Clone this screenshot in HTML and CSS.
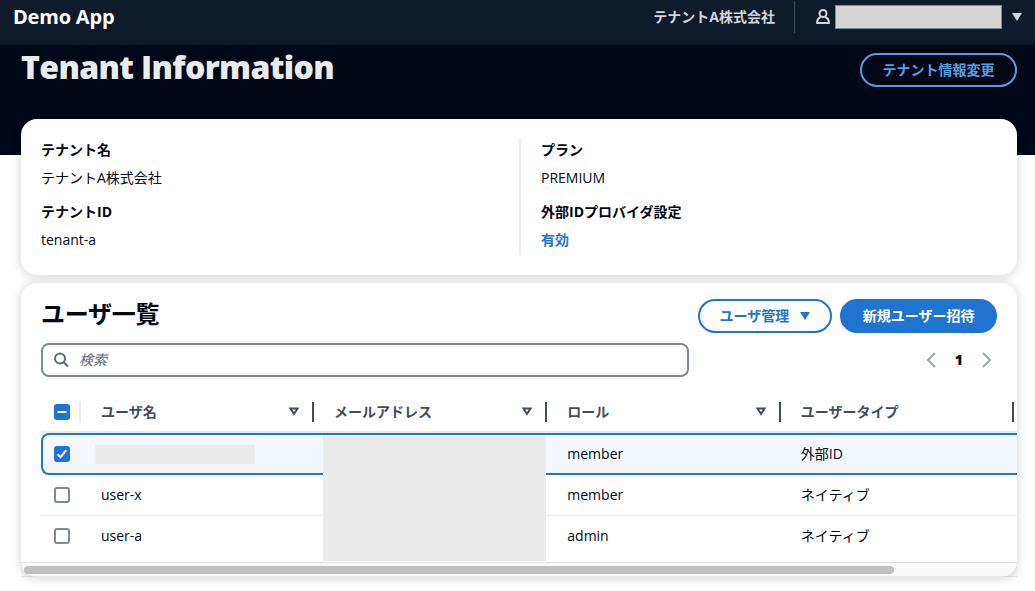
FILE: index.html
```html
<!DOCTYPE html>
<html lang="ja">
<head>
<meta charset="utf-8">
<title>Demo App</title>
<link rel="stylesheet" href="styles.css">
</head>
<body>
<header class="topnav">
  <div class="brand">Demo App</div>
  <div class="tenant">テナントA株式会社</div>
  <div class="account">
    <svg class="user-icon" width="16" height="16" viewBox="0 0 16 16" fill="none" stroke="currentColor" stroke-width="2" stroke-linejoin="round"><circle cx="8" cy="4.500" r="3.500"/><path d="M6 8C3.300 8.800 2.200 11 2 14h12c-.2-3-1.300-5.200-4-6"/></svg>
    <span class="account-name"></span>
    <svg class="caret" width="10" height="8" viewBox="0 0 10 8"><path d="M0 0h10L5 8z" fill="currentColor"/></svg>
  </div>
</header>
<section class="hero">
  <h1 class="hero-title">Tenant Information</h1>
  <button class="btn btn-dark">テナント情報変更</button>
</section>
<main class="content">
  <section class="card info">
    <dl class="info-col">
      <dt>テナント名</dt><dd>テナントA株式会社</dd>
      <dt>テナントID</dt><dd>tenant-a</dd>
    </dl>
    <dl class="info-col">
      <dt>プラン</dt><dd>PREMIUM</dd>
      <dt>外部IDプロバイダ設定</dt><dd><a class="link">有効</a></dd>
    </dl>
  </section>
  <section class="card users">
    <div class="users-head">
      <h2 class="users-title">ユーザ一覧</h2>
      <div class="actions">
        <button class="btn btn-normal">ユーザ管理<svg class="caret" width="10" height="8" viewBox="0 0 10 8"><path d="M0 0h10L5 8z" fill="currentColor"/></svg></button>
        <button class="btn btn-primary">新規ユーザー招待</button>
      </div>
    </div>
    <div class="tools">
      <div class="search">
        <svg width="16" height="16" viewBox="0 0 16 16" fill="none" stroke="currentColor" stroke-width="2"><circle cx="7" cy="6.500" r="5"/><path d="M10.700 10.200l4.300 4.300"/></svg>
        <span class="placeholder">検索</span>
      </div>
      <div class="pager">
        <svg width="10" height="16" viewBox="0 0 10 16" fill="none" stroke="currentColor" stroke-width="2"><path d="M9 1L2 8l7 7"/></svg>
        <span class="page">1</span>
        <svg width="10" height="16" viewBox="0 0 10 16" fill="none" stroke="currentColor" stroke-width="2"><path d="M1 1l7 7-7 7"/></svg>
      </div>
    </div>
    <div class="table">
      <div class="row head">
        <div class="select"><span class="check on"><svg width="16" height="16" viewBox="0 0 16 16"><path d="M3.500 8h9" stroke="#fff" stroke-width="2"/></svg></span></div>
        <div class="cell">ユーザ名<svg class="sort" width="10" height="9" viewBox="0 0 10 9"><path d="M1.500 1.500h7L5 7z"/></svg></div>
        <div class="cell">メールアドレス<svg class="sort" width="10" height="9" viewBox="0 0 10 9"><path d="M1.500 1.500h7L5 7z"/></svg></div>
        <div class="cell">ロール<svg class="sort" width="10" height="9" viewBox="0 0 10 9"><path d="M1.500 1.500h7L5 7z"/></svg></div>
        <div class="cell">ユーザータイプ</div>
      </div>
      <div class="rows">
        <div class="row selected">
          <div class="select"><span class="check on"><svg width="16" height="16" viewBox="0 0 16 16" fill="none"><path d="M3.500 8.300l3 2.900 5.700-7" stroke="#fff" stroke-width="2"/></svg></span></div>
          <div class="cell"><span class="masked-name"></span></div>
          <div class="cell"></div>
          <div class="cell">member</div>
          <div class="cell">外部ID</div>
        </div>
        <div class="row">
          <div class="select"><span class="check"></span></div>
          <div class="cell">user-x</div>
          <div class="cell"></div>
          <div class="cell">member</div>
          <div class="cell">ネイティブ</div>
        </div>
        <div class="row last">
          <div class="select"><span class="check"></span></div>
          <div class="cell">user-a</div>
          <div class="cell"></div>
          <div class="cell">admin</div>
          <div class="cell">ネイティブ</div>
        </div>
        <div class="masked-mail"></div>
      </div>
    </div>
    <div class="scrollbar"><div class="thumb"></div></div>
  </section>
</main>
</body>
</html>
```
FILE: styles.css
```css
* { box-sizing: border-box; }
body {
  margin: 0;
  height: 591px;
  overflow: hidden;
  background: #fff;
  color: #000716;
  font: 14px/20px "Open Sans", "Noto Sans CJK JP", sans-serif;
}
h1, h2, dl, dd { margin: 0; }
svg { display: block; flex: none; }

.topnav {
  display: flex;
  height: 45px;
  padding: 1px 13px 0 13px;
  background: #0f1b2a;
  color: #d1d5db;
  font-weight: 700;
}
.brand {
  flex: 1;
  padding-top: 4px;
  color: #fff;
  font-size: 20px;
  line-height: 24px;
  letter-spacing: -0.2px;
}
.tenant {
  height: 32px;
  padding: 6px 19px 0 0;
  border-right: 1px solid #414d5c;
}
.account { display: flex; height: 32px; padding-left: 20px; align-items: center; }
.account-name {
  width: 167px;
  height: 24px;
  margin: 0 10px 0 4px;
  border: 1px solid #7d8998;
  background: #d5d5d5;
}

.hero {
  display: flex;
  justify-content: space-between;
  height: 110px;
  padding: 8px 18px 0 21px;
  background: #000716;
}
.hero-title {
  margin-top: -6px;
  color: #e9ebed;
  font-size: 32px;
  font-weight: 800;
  line-height: 40px;
  letter-spacing: -0.64px;
}

.btn {
  display: flex;
  align-items: center;
  height: 34px;
  padding: 0 20px;
  border: 2px solid #1f74d1;
  border-radius: 17px;
  font: inherit;
  font-weight: 700;
  white-space: nowrap;
}
.btn-dark { padding: 0 20.500px; border-color: #539fe5; background: none; color: #539fe5; }
.btn-normal { gap: 11px; background: #fff; color: #1f74d1; }
.btn-primary { padding: 0 20.500px; background: #1f74d1; color: #fff; }

.content {
  display: flex;
  flex-direction: column;
  gap: 8px;
  margin-top: -36px;
  padding: 0 18px 0 21px;
}
.card {
  border-radius: 16px;
  background: #fff;
  box-shadow: 0 1px 8px 2px rgba(0, 7, 22, 0.13);
}

.info { display: grid; grid-template-columns: 1fr 1fr; height: 156px; padding: 20px 20px; }
.info-col { height: 116px; padding-top: 1px; }
.info-col + .info-col { padding-left: 20px; border-left: 2px solid #e9ebed; }
.info-col dt { margin-bottom: 8px; font-weight: 700; }
.info-col dd { margin-bottom: 14px; }
.link { color: #1f74d1; font-weight: 700; }

.users { height: 294px; padding-top: 16px; }
.users-head { display: flex; justify-content: space-between; height: 44px; padding: 0 20px; }
.users-title { font-size: 24px; line-height: 30px; letter-spacing: -0.24px; }
.actions { display: flex; gap: 8px; }

.tools { display: flex; justify-content: space-between; padding: 0 25px 0 20px; }
.search {
  display: flex;
  align-items: center;
  gap: 10px;
  width: 648px;
  height: 34px;
  padding-left: 10px;
  border: 2px solid #7d8998;
  border-radius: 8px;
  color: #5f6b7a;
}
.placeholder { font-style: italic; }
.pager { display: flex; align-items: center; gap: 19px; color: #9ba7b6; }
.page { color: #000716; font-weight: 800; }

.table { margin-left: 20px; overflow: hidden; }
.row {
  display: grid;
  grid-template-columns: 40px 232.900px 233.400px 233.500px 233.400px;
  align-items: center;
  height: 41px;
  border-bottom: 1px solid #e9ebed;
}
.row.last { height: 40px; border-bottom: 0; }
.row.selected {
  height: 42px;
  border: 2px solid #1f74d1;
  border-right: 0;
  border-radius: 8px 0 0 8px;
  background: #f2f8fd;
}
.row.selected .select { margin-left: -2px; }
.row.selected .cell { margin-left: -2px; }
.row.head {
  height: 56px;
  padding-top: 15px;
  border-bottom: 2px solid #e9ebed;
  color: #414d5c;
  font-weight: 700;
}
.head .select { height: 20px; border-right: 2px solid #e9ebed; }
.head .cell { height: 20px; padding-right: 13px; border-right: 2px solid #414d5c; }
.select { display: flex; align-items: center; padding-left: 13px; }
.check { width: 16px; height: 16px; border: 2px solid #7d8998; border-radius: 3px; }
.check.on { border: 0; background: #1f74d1; }
.cell { display: flex; align-items: center; justify-content: space-between; padding-left: 20px; }
.sort { fill: none; stroke: #414d5c; stroke-width: 2; }

.rows { position: relative; height: 129px; }
.masked-name { width: 160px; height: 19px; margin-left: -6px; background: #ebebeb; }
.masked-mail {
  position: absolute;
  top: 3px;
  left: 282px;
  width: 223px;
  height: 125px;
  background: #ebebeb;
}
.scrollbar {
  height: 15px;
  padding: 3px 3px 0;
  border-top: 1px solid rgba(0, 0, 0, 0.09);
  border-bottom: 1px solid rgba(0, 0, 0, 0.07);
  background: rgba(0, 0, 0, 0.02);
}
.thumb { width: 870px; height: 8px; border-radius: 4px; background: #c1c1c1; }
```
